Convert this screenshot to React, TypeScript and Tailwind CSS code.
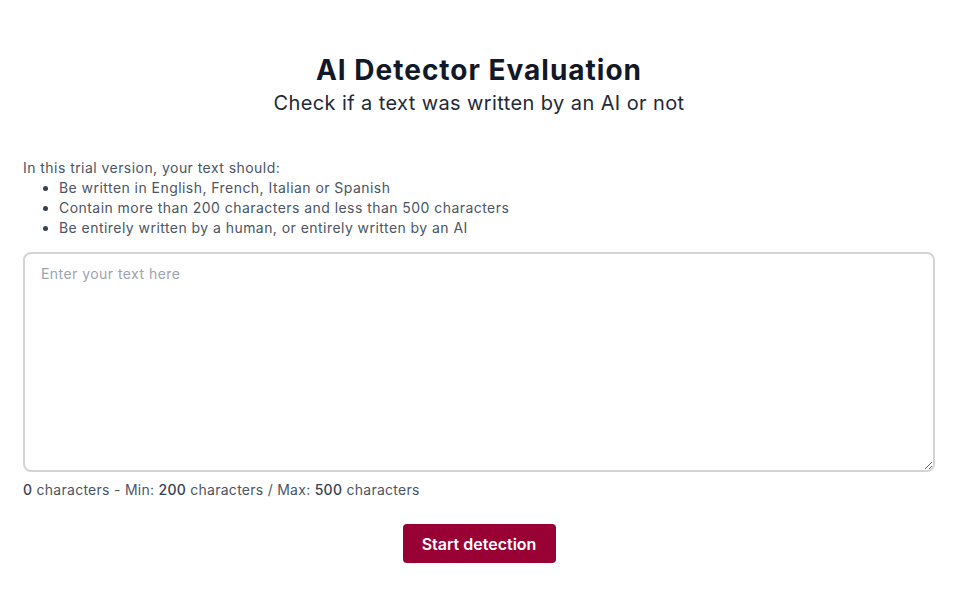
import React from "react";

export default function App() {
  return (
    <div className="min-h-screen bg-white px-[23px] pt-[52px]" style={{ fontFamily: "Inter, 'Open Sans', sans-serif" }}>
      <div className="flex flex-col items-center">
        <h1 className="text-[28px] leading-[36px] font-bold text-[#111827] tracking-[1px]">AI Detector Evaluation</h1>
        <p className="text-[20px] leading-[28px] text-[#1f2937] tracking-[0.4px] mt-[1px]">Check if a text was written by an AI or not</p>
      </div>
      <div className="mt-[41px] text-[14px] leading-[20px] text-[#4b5563] tracking-[0.45px]">
        <p>In this trial version, your text should:</p>
        <ul className="list-disc pl-[36px] marker:text-[#374151]">
          <li>Be written in English, French, Italian or Spanish</li>
          <li>Contain more than 200 characters and less than 500 characters</li>
          <li>Be entirely written by a human, or entirely written by an AI</li>
        </ul>
      </div>
      <textarea
        className="mt-[14px] block w-full h-[220px] rounded-[8px] border-2 border-[#d4d4d8] px-[16px] py-[10px] text-[14px] leading-[20px] tracking-[0.45px] text-[#374151] placeholder:text-[#9ca3af] outline-none"
        placeholder="Enter your text here"
      />
      <p className="mt-[8px] text-[14px] leading-[20px] text-[#4b5563] tracking-[0.27px]">
        <span className="font-medium text-[#374151]">0</span> characters - Min: <span className="font-medium text-[#374151]">200</span> characters / Max: <span className="font-medium text-[#374151]">500</span> characters
      </p>
      <div className="mt-[24px] flex justify-center">
        <button className="h-[39px] w-[153px] rounded-[4px] bg-[#990033] text-white text-[16px] font-semibold">Start detection</button>
      </div>
    </div>
  );
}
